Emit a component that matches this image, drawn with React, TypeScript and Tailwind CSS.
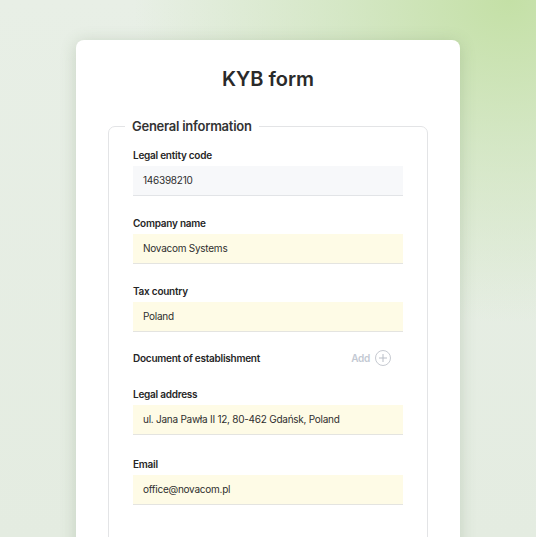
import React from 'react';

type Field = { label: string; value: string; tone: 'gray' | 'yellow' };

const before: Field[] = [
  { label: 'Legal entity code', value: '146398210', tone: 'gray' },
  { label: 'Company name', value: 'Novacom Systems', tone: 'yellow' },
  { label: 'Tax country', value: 'Poland', tone: 'yellow' },
];

function FormField({ label, value, tone }: Field) {
  return (
    <div className="flex flex-col">
      <label className="text-[10px] leading-[14px] font-semibold tracking-[-0.025em] text-[#262626] mb-[4px]">{label}</label>
      <div
        className={
          tone === 'gray'
            ? 'h-[30px] flex items-center px-[10px] bg-[#f7f8fa] border-b border-[#e2e4e7] text-[10px] tracking-[-0.025em] text-[#2e2e2e]'
            : 'h-[30px] flex items-center px-[10px] bg-[#fefbe6] border-b border-[#e4e4e0] text-[10px] tracking-[-0.025em] text-[#2e2e2e]'
        }
      >
        {value}
      </div>
    </div>
  );
}

export default function App() {
  return (
    <div
      className="h-[537px] w-full overflow-hidden bg-[#e5ede2]"
      style={{
        fontFamily: 'Inter, "Noto Sans", sans-serif',
        backgroundImage:
          'radial-gradient(ellipse 70% 60% at 95% 0%, #c4e0a6 0%, rgba(200,226,176,0.6) 45%, rgba(229,237,226,0) 100%), linear-gradient(180deg, #e8efe6 0%, #e4ece1 100%)',
      }}
    >
      <div className="pt-[40px] pl-[76px]">
        <div className="w-[384px] h-[560px] bg-white rounded-[8px] shadow-[0_2px_16px_rgba(80,110,70,0.22)] px-[32px] pt-[24px]">
          {/* Title */}
          <h1 className="text-center text-[20px] leading-[30px] font-semibold text-[#2a2a2a]">KYB form</h1>

          {/* General information */}
          <fieldset className="mt-[23px] border border-[#e3e4e6] rounded-[7px] pb-[40px]">
            <legend className="ml-[16px] px-[7px] text-[13px] leading-[18px] font-semibold tracking-[-0.02em] text-[#333]">
              General information
            </legend>
            <div className="px-[24px] pt-[13px] flex flex-col gap-[20px]">
              {before.map((f) => (
                <FormField key={f.label} {...f} />
              ))}

              <div className="-mt-[2px] mb-[1px] flex items-center justify-between pr-[12px] h-[16px]">
                <span className="text-[10px] leading-[14px] font-semibold tracking-[-0.025em] text-[#262626]">
                  Document of establishment
                </span>
                <button className="flex items-center gap-[5px] text-[10px] font-semibold tracking-[-0.025em] text-[#c3c9d3]">
                  Add
                  <span className="w-[16px] h-[16px] rounded-full border border-[#c6cad1] flex items-center justify-center">
                    <svg width="10" height="10" viewBox="0 0 10 10" fill="none" stroke="#b9bec7" strokeWidth="1">
                      <path d="M5 1v8M1 5h8" />
                    </svg>
                  </span>
                </button>
              </div>

              <FormField label="Legal address" value="ul. Jana Pawła II 12, 80-462 Gdańsk, Poland" tone="yellow" />
              <div className="mt-[2px]">
                <FormField label="Email" value="office@novacom.pl" tone="yellow" />
              </div>
            </div>
          </fieldset>
        </div>
      </div>
    </div>
  );
}
